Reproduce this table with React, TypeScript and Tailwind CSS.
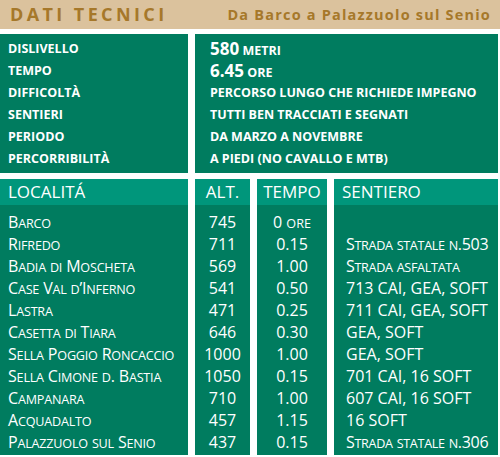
import React from "react";

function SC({ text, small = "text-[12.6px]" }: { text: string; small?: string }) {
  const parts: { s: string; low: boolean }[] = [];
  for (const ch of text) {
    const low = ch !== ch.toUpperCase();
    const last = parts[parts.length - 1];
    if (last && last.low === low) last.s += ch;
    else parts.push({ s: ch, low });
  }
  return (
    <span>
      {parts.map((p, i) =>
        p.low ? (
          <span key={i} className={small}>
            {p.s.toUpperCase()}
          </span>
        ) : (
          <span key={i}>{p.s}</span>
        )
      )}
    </span>
  );
}

const info: [string, React.ReactNode][] = [
  ["DISLIVELLO", <><span className="text-[17px]">580</span> <span>METRI</span></>],
  ["TEMPO", <><span className="text-[17px]">6.45</span> <span>ORE</span></>],
  ["DIFFICOLTÀ", "PERCORSO LUNGO CHE RICHIEDE IMPEGNO"],
  ["SENTIERI", "TUTTI BEN TRACCIATI E SEGNATI"],
  ["PERIODO", "DA MARZO A NOVEMBRE"],
  ["PERCORRIBILITÀ", "A PIEDI (NO CAVALLO E MTB)"],
];

const rows: [string, string, React.ReactNode, React.ReactNode][] = [
  ["Barco", "745", <SC text="0 ore" />, ""],
  ["Rifredo", "711", "0.15", <span className="tracking-[-0.3px]"><SC text="Strada statale n.503" /></span>],
  ["Badia di Moscheta", "569", "1.00", <span className="tracking-[-0.3px]"><SC text="Strada asfaltata" /></span>],
  ["Case Val d’Inferno", "541", "0.50", "713 CAI, GEA, SOFT"],
  ["Lastra", "471", "0.25", "711 CAI, GEA, SOFT"],
  ["Casetta di Tiara", "646", "0.30", "GEA, SOFT"],
  ["Sella Poggio Roncaccio", "1000", "1.00", "GEA, SOFT"],
  ["Sella Cimone d. Bastia", "1050", "0.15", "701 CAI, 16 SOFT"],
  ["Campanara", "710", "1.00", "607 CAI, 16 SOFT"],
  ["Acquadalto", "457", "1.15", "16 SOFT"],
  ["Palazzuolo sul Senio", "437", "0.15", <span className="tracking-[-0.3px]"><SC text="Strada statale n.306" /></span>],
];

function Col({
  width,
  title,
  align,
  items,
}: {
  width: string;
  title: string;
  align: "left" | "center";
  items: React.ReactNode[];
}) {
  const al = align === "center" ? "text-center" : "text-left pl-[12px]";
  return (
    <div className={`${width} flex flex-col`}>
      <div className={`h-[26px] bg-[#00967b] text-[17px] leading-[26px] ${align === "center" ? "text-center" : "text-left pl-[8px]"}`}>
        {title}
      </div>
      <div className="flex-1 bg-[#007c5f] pt-[6px]">
        {items.map((it, i) => (
          <div key={i} className={`h-[22px] leading-[22px] text-[16px] whitespace-nowrap ${al}`}>
            {it}
          </div>
        ))}
      </div>
    </div>
  );
}

export default function App() {
  return (
    <div
      className="w-[500px] h-[457px] bg-white text-white overflow-hidden"
      style={{ fontFamily: '"Open Sans", "Noto Sans", sans-serif' }}
    >
      <div className="h-[29px] bg-[#dbc29d] flex items-center text-[#a6782a] font-bold">
        <span className="pl-[10px] text-[18px] tracking-[3.4px]">DATI TECNICI</span>
        <span className="ml-auto pr-[9px] text-[14.5px] tracking-[1.2px]">Da Barco a Palazzuolo sul Senio</span>
      </div>
      <div className="mt-[5px] flex gap-[7px] h-[139px] font-bold text-[12.5px]">
        <div className="w-[188px] bg-[#007c5f] pt-[4px] pl-[8px]">
          {info.map(([l]) => (
            <div key={l} className="h-[22px] leading-[22px]">{l}</div>
          ))}
        </div>
        <div className="w-[303px] bg-[#007c5f] pt-[4px] pl-[15px]">
          {info.map(([l, v]) => (
            <div key={l} className="h-[22px] leading-[22px] whitespace-nowrap">{v}</div>
          ))}
        </div>
      </div>
      <div className="mt-[6px] flex gap-[7px] h-[276px]">
        <Col
          width="w-[188px]"
          title="LOCALITÁ"
          align="left"
          items={rows.map((r) => (
            <span className="-ml-[4px] tracking-[-0.2px]">
              <SC text={r[0]} />
            </span>
          ))}
        />
        <Col width="w-[55px]" title="ALT." align="center" items={rows.map((r) => r[1])} />
        <Col width="w-[70px]" title="TEMPO" align="center" items={rows.map((r) => r[2])} />
        <Col width="w-[164px]" title="SENTIERO" align="left" items={rows.map((r) => r[3])} />
      </div>
    </div>
  );
}
